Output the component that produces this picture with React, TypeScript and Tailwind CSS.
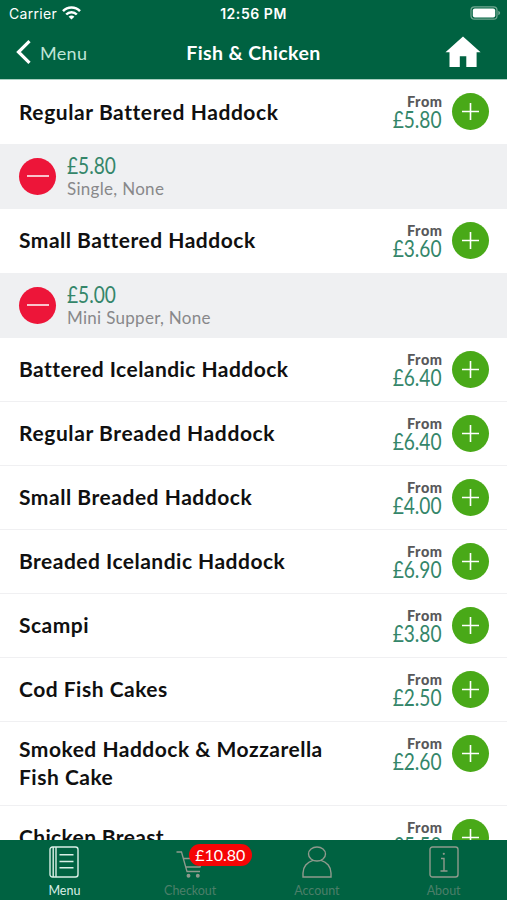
import React from "react";

type Item = {
  name: string;
  price: string;
  row: string;
  title: string;
  basket?: { price: string; options: string };
};

const items: Item[] = [
  {
    name: "Regular Battered Haddock",
    price: "£5.80",
    row: "h-16",
    title: "mt-[18px] tracking-[0.57px]",
    basket: { price: "£5.80", options: "Single, None" },
  },
  {
    name: "Small Battered Haddock",
    price: "£3.60",
    row: "h-16",
    title: "mt-[17px] tracking-[0.5px]",
    basket: { price: "£5.00", options: "Mini Supper, None" },
  },
  { name: "Battered Icelandic Haddock", price: "£6.40", row: "h-16 border-b", title: "mt-[17px] tracking-[0.45px]" },
  { name: "Regular Breaded Haddock", price: "£6.40", row: "h-16 border-b", title: "mt-[17px] tracking-[0.6px]" },
  { name: "Small Breaded Haddock", price: "£4.00", row: "h-16 border-b", title: "mt-[17px] tracking-[0.53px]" },
  { name: "Breaded Icelandic Haddock", price: "£6.90", row: "h-16 border-b", title: "mt-[17px] tracking-[0.48px]" },
  { name: "Scampi", price: "£3.80", row: "h-16 border-b", title: "mt-[17px] tracking-[0.5px]" },
  { name: "Cod Fish Cakes", price: "£2.50", row: "h-16 border-b", title: "mt-[17px] tracking-[0.5px]" },
  { name: "Smoked Haddock & Mozzarella Fish Cake", price: "£2.60", row: "h-[84px] border-b", title: "mt-[13px] tracking-[0.5px]" },
  { name: "Chicken Breast", price: "£5.50", row: "h-16", title: "mt-[17px] tracking-[0.35px]" },
];

function StatusBar() {
  return (
    <div className="grid h-[27px] grid-cols-[1fr_auto_1fr] items-center px-[6px] text-white">
      <div className="flex items-center gap-[5px] pl-[3px]">
        <span className="text-[14px] leading-none tracking-[0.3px]">Carrier</span>
        <svg className="-mt-px" width="19" height="14" viewBox="0 0 19 14" fill="none" stroke="currentColor" strokeWidth="2.5">
          <path d="M1 5.2C5.7.3 13.3.3 18 5.2" />
          <path d="M4.2 8.5c2.9-3.1 7.7-3.1 10.6 0" />
          <path d="M9.5 13.6 6.6 10.8c1.7-1.6 4.1-1.6 5.8 0z" fill="currentColor" stroke="none" />
        </svg>
      </div>
      <span className="whitespace-nowrap text-[14px] font-semibold leading-none tracking-[0.55px]">12:56 PM</span>
      <svg className="-mt-px justify-self-end" width="31" height="14" viewBox="0 0 31 14">
        <rect x="1" y=".8" width="26" height="12.4" rx="3.5" fill="none" stroke="#72a892" strokeWidth="1.2" />
        <rect x="2.8" y="2.6" width="22.4" height="8.8" rx="2" fill="white" />
        <path d="M28.3 4.8c2.4.8 2.4 3.6 0 4.4z" fill="#72a892" />
      </svg>
    </div>
  );
}

function NavBar() {
  return (
    <div className="grid h-[52px] grid-cols-[1fr_auto_1fr] items-center px-4 font-[Lato,sans-serif] text-white">
      <div className="flex items-center gap-[9px]">
        <svg className="-mt-[2px]" width="15" height="24" viewBox="0 0 15 24" fill="none" stroke="currentColor" strokeWidth="3.2">
          <path d="M13.5 1.2 2.5 12l11 10.8" />
        </svg>
        <span className="text-[18px] leading-none tracking-[0.3px] text-[#bfe5d7]">Menu</span>
      </div>
      <h1 className="-mt-px text-[19.5px] font-bold leading-none tracking-[0.4px]">Fish &amp; Chicken</h1>
      <svg className="-mt-[2px] mr-[10px] justify-self-end" width="36" height="32" viewBox="0 0 36 32" fill="currentColor">
        <path d="M18 .5.5 16.3h4V31h10.3V20.2h6.5V31h10.3V16.3h4z" />
      </svg>
    </div>
  );
}

function AddButton() {
  return (
    <button className="flex size-[37px] shrink-0 items-center justify-center rounded-full bg-[#49a918]">
      <svg width="19" height="19" viewBox="0 0 19 19" stroke="white" strokeWidth="1.6">
        <path d="M1 9.5h17M9.5 1v17" />
      </svg>
    </button>
  );
}

function MenuRow({ item }: { item: Item }) {
  return (
    <>
      <div className={`flex shrink-0 items-start border-[#f0f0f2] bg-white pl-[19px] pr-[18px] ${item.row}`}>
        <h2 className={`w-[320px] text-[21px] font-bold leading-7 text-[#101010] ${item.title}`}>{item.name}</h2>
        <div className="ml-auto mr-[10px] mt-[13px] flex flex-col items-end">
          <span className="-mr-[0.5px] text-[14.5px] font-black leading-[18px] tracking-[0.5px] text-[#58585a]">From</span>
          <span className="origin-right scale-x-[0.85] text-[22.5px] leading-[18px] text-[#34866a]">{item.price}</span>
        </div>
        <div className="mt-[13px]">
          <AddButton />
        </div>
      </div>
      {item.basket && (
        <div className="flex h-[65px] shrink-0 items-center bg-[#eff0f2] pl-[19px]">
          <button className="-mt-px flex size-[37px] items-center justify-center rounded-full bg-[#ed1539]">
            <span className="h-[1.5px] w-[22px] bg-[#f9c3cc]" />
          </button>
          <div className="ml-[11px] flex flex-col items-start">
            <span className="origin-left scale-x-[0.85] text-[22.5px] leading-[22px] text-[#34866a]">{item.basket.price}</span>
            <span className="mt-px text-[17px] leading-[21px] tracking-[0.3px] text-[#88888a]">{item.basket.options}</span>
          </div>
        </div>
      )}
    </>
  );
}

function TabBar() {
  const tab = "flex flex-col items-center pt-[6px] text-[12.5px] leading-none";
  return (
    <nav className="grid h-[60px] shrink-0 grid-cols-4 bg-[#006241] font-[Lato,sans-serif]">
      <div className={`${tab} text-[#d9efe6]`}>
        <svg className="ml-[2px]" width="30" height="32" viewBox="0 0 30 32" fill="none" stroke="currentColor" strokeWidth="1.4">
          <rect x="1" y="1" width="28" height="30" rx="2.5" />
          <path d="M4.2 1v30M7 1v30M10.5 8.8h14M10.5 15.5h14M10.5 21.8h14" />
        </svg>
        <span className="mt-[7px] pl-[2px]">Menu</span>
      </div>
      <div className={`${tab} relative text-[#4c7f69]`}>
        <svg width="30" height="32" viewBox="0 0 30 32" fill="none" stroke="#8f9a8d" strokeWidth="1.3">
          <path d="M1.5 6h5L12 25.5h13M8.5 12.5H28L25 21H11" />
          <circle cx="13.5" cy="29.7" r="1.3" fill="#8f9a8d" />
          <circle cx="22.8" cy="29.7" r="1.3" fill="#8f9a8d" />
        </svg>
        <span className="mt-[7px] tracking-[-0.05px]">Checkout</span>
        <span className="absolute left-[62px] top-1 flex h-[22px] w-[63px] items-center justify-center rounded-full bg-[#f50505] text-[16px] leading-none text-white">
          £10.80
        </span>
      </div>
      <div className={`${tab} text-[#4c7f69]`}>
        <svg width="30" height="32" viewBox="0 0 30 32" fill="none" stroke="#8f9a8d" strokeWidth="1.4">
          <ellipse cx="15" cy="8" rx="8.5" ry="7" />
          <path d="M11 14.3C5 16 1 21 1 27v4h28v-4c0-6-4-11-10-12.7" />
        </svg>
        <span className="mt-[7px]">Account</span>
      </div>
      <div className={`${tab} text-[#4c7f69]`}>
        <svg width="30" height="32" viewBox="0 0 30 32" fill="none" stroke="#8f9a8d" strokeWidth="1.4">
          <rect x="1" y="1" width="28" height="30" rx="2.5" />
          <path d="M12 12.5h3V25M11.5 25h7" />
          <circle cx="14.8" cy="7.8" r="1.1" fill="#8f9a8d" stroke="none" />
        </svg>
        <span className="mt-[7px]">About</span>
      </div>
    </nav>
  );
}

export default function App() {
  return (
    <div className="flex h-[900px] w-[507px] flex-col overflow-hidden bg-white font-[Inter,sans-serif]">
      <header className="h-[79px] shrink-0 bg-[#006241]">
        <StatusBar />
        <NavBar />
      </header>
      <main className="flex min-h-0 flex-1 flex-col overflow-hidden border-t border-[#a9d0c1] font-[Lato,sans-serif]">
        {items.map((item) => (
          <MenuRow key={item.name} item={item} />
        ))}
      </main>
      <TabBar />
    </div>
  );
}
